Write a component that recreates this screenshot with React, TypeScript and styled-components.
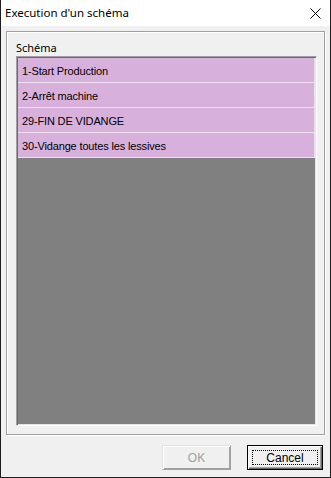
import { createGlobalStyle, styled } from "styled-components";

const schemas = [
  "1-Start Production",
  "2-Arrêt machine",
  "29-FIN DE VIDANGE",
  "30-Vidange toutes les lessives",
];

const GlobalStyle = createGlobalStyle`
  html, body {
    margin: 0;
    padding: 0;
    background: #f0f0f0;
  }
  * {
    box-sizing: border-box;
  }
`;

export default function App() {
  return (
    <>
      <GlobalStyle />
      <Window>
        <TitleBar>
          <Title>Execution d'un schéma</Title>
          <CloseButton aria-label="Fermer">
            <svg width="11" height="11" viewBox="0 0 11 11">
              <path d="M0.5 0.5 L10.5 10.5 M10.5 0.5 L0.5 10.5" stroke="#000" strokeWidth="1" fill="none" />
            </svg>
          </CloseButton>
        </TitleBar>
        <Body>
          <GroupBox>
            <GroupLabel>Schéma</GroupLabel>
            <ListBox>
              {schemas.map((name) => (
                <ListItem key={name}>{name}</ListItem>
              ))}
            </ListBox>
          </GroupBox>
          <Footer>
            <DialogButton disabled>OK</DialogButton>
            <DialogButton $default>
              <FocusRect>Cancel</FocusRect>
            </DialogButton>
          </Footer>
        </Body>
      </Window>
    </>
  );
}

const Window = styled.div`
  width: 331px;
  height: 478px;
  display: flex;
  flex-direction: column;
  border: 1px solid #1e1e1e;
  border-top: none;
  background: #f0f0f0;
`;

const TitleBar = styled.div`
  height: 26px;
  background: #ffffff;
  display: flex;
  align-items: center;
  justify-content: space-between;
  padding: 0 9px 0 4px;
`;

const Title = styled.span`
  font-family: "Noto Sans", "Open Sans", sans-serif;
  font-size: 11.5px;
  color: #000;
  margin-top: -1px;
`;

const CloseButton = styled.div`
  width: 11px;
  height: 11px;
  display: flex;
  margin-top: 1px;
`;

const Body = styled.div`
  flex: 1;
  display: flex;
  flex-direction: column;
  padding: 5px 5px 0 5px;
`;

const GroupBox = styled.div`
  height: 404px;
  width: 319px;
  border: 1px solid #a0a0a0;
  box-shadow: inset 1px 1px 0 #ffffff, 1px 1px 0 #ffffff;
  display: flex;
  flex-direction: column;
  padding: 8px 7px 8px 9px;
`;

const GroupLabel = styled.div`
  font-family: "Noto Sans", "Open Sans", sans-serif;
  font-size: 11px;
  line-height: 16px;
  color: #000;
  height: 16px;
`;

const ListBox = styled.div`
  flex: 1;
  background: #808080;
  border-top: 1px solid #a0a0a0;
  border-left: 1px solid #a0a0a0;
  border-bottom: 1px solid #ffffff;
  border-right: 1px solid #ffffff;
  box-shadow: inset 1px 1px 0 #696969, inset -1px -1px 0 #e3e3e3;
  padding: 1px;
  display: flex;
  flex-direction: column;
`;

const ListItem = styled.div`
  height: 25px;
  background: #d8b0dc;
  border-bottom: 1px solid #ece3ee;
  border-right: 1px solid #ece3ee;
  padding: 1px 0 0 4px;
  display: flex;
  align-items: center;
  font-family: "Liberation Sans", Arial, sans-serif;
  font-size: 11px;
  letter-spacing: -0.15px;
  color: #000;
`;

const Footer = styled.div`
  display: flex;
  justify-content: flex-end;
  gap: 16px;
  padding: 10px 2px 0 0;
`;

const DialogButton = styled.button<{ $default?: boolean }>`
  height: 25px;
  width: ${(p) => (p.$default ? "76px" : "69px")};
  padding: 0;
  font-family: "Liberation Sans", Arial, sans-serif;
  font-size: 12px;
  background: #f0f0f0;
  color: #000;
  border: 1px solid ${(p) => (p.$default ? "#000" : "#cfcfcf")};
  box-shadow: ${(p) =>
    p.$default
      ? "inset 1px 1px 0 #ffffff, inset -1px -1px 0 #696969, inset -2px -2px 0 #a0a0a0"
      : "inset 1px 1px 0 #ffffff, inset -1px -1px 0 #a0a0a0"};
  display: flex;
  align-items: center;
  justify-content: center;

  &:disabled {
    color: #a0a0a0;
    border-color: #e3e3e3 #a0a0a0 #a0a0a0 #e3e3e3;
  }
`;

const FocusRect = styled.span`
  display: flex;
  align-items: center;
  justify-content: center;
  width: calc(100% - 8px);
  height: calc(100% - 8px);
  border: 1px dotted #000;
`;
